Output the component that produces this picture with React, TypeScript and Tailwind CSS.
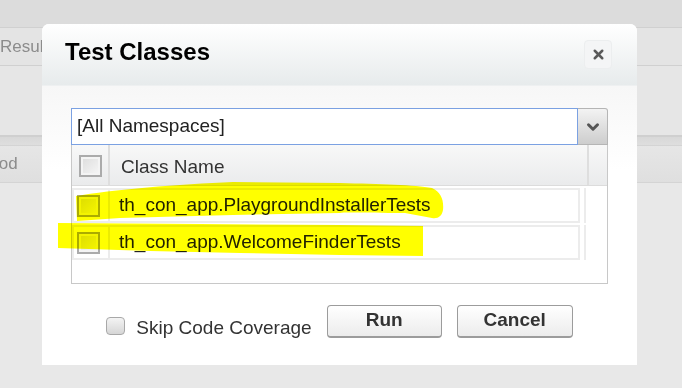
import { X, ChevronDown } from "lucide-react";

const font = { fontFamily: '"Liberation Sans", Arial, sans-serif' };

const Box = ({ className = "" }: { className?: string }) => (
  <div
    className={`h-[22px] w-[23px] border-2 border-[#ababab] bg-linear-to-br from-[#dcdcdc] to-[#f7f7f7] shadow-[inset_0_0_0_2px_#f4f4f4] ${className}`}
  ></div>
);

const rows = [
  "th_con_app.PlaygroundInstallerTests",
  "th_con_app.WelcomeFinderTests",
];

const App = () => {
  return (
    <div
      className="relative flex h-[388px] w-[682px] flex-col overflow-hidden bg-[#e8e8e8]"
      style={font}
    >
      {/* page behind the dialog */}
      <div className="h-[27px] bg-[#dcdcdc]"></div>
      <div className="h-[39px] border-y border-[#d0d0d0] bg-[#e4e4e4] text-[17px] leading-[37px] text-[#8c8c8c]">
        Results
      </div>
      <div className="h-[69px] bg-[#e6e6e6]"></div>
      <div className="h-[10px] border-t-2 border-[#cfcfcf] bg-linear-to-b from-[#d8d8d8] to-[#dedede]"></div>
      <div className="h-[38px] border-y border-[#d4d4d4] bg-linear-to-b from-[#e6e6e6] to-[#dfdfdf] pl-[1px] text-[17px] leading-[36px] text-[#8c8c8c]">
        <span className="-ml-[40px]">Method</span>
      </div>
      <div className="flex-1 bg-[#e8e8e8]"></div>

      {/* Test Classes dialog */}
      <div className="absolute left-[42px] top-[24px] flex h-[341px] w-[595px] flex-col rounded-[7px] bg-white">
        {/* header */}
        <div className="flex h-[62px] items-start justify-between rounded-t-[7px] border-b border-[#eef0f1] bg-linear-to-b from-white to-[#e7ebec] pl-[23px] pr-[25px]">
          <span className="mt-[14px] text-[24px] font-bold leading-[28px] text-black">
            Test Classes
          </span>
          <div className="mt-[16px] flex h-[29px] w-[28px] items-center justify-center rounded-[4px] border border-[#eceeef] bg-[#f4f5f6]">
            <X size={15} strokeWidth={4} className="text-[#5a5a5a]" />
          </div>
        </div>

        {/* body */}
        <div className="flex flex-1 flex-col bg-linear-to-b from-[#f7f7f7] to-white to-[30%] px-[29px] pt-[22px]">
          {/* namespace select */}
          <div className="flex h-[37px]">
            <div className="flex flex-1 items-center border border-[#7ba1e2] bg-white pl-[5px] text-[19px] text-[#222]">
              [All Namespaces]
            </div>
            <div className="flex w-[30px] items-center justify-center rounded-tr-[3px] border border-l-0 border-[#b5b5b5] bg-linear-to-b from-[#f3f3f3] to-[#cdcdcd]">
              <ChevronDown size={18} strokeWidth={4} className="text-[#555]" />
            </div>
          </div>

          {/* class table */}
          <div className="flex h-[139px] flex-col border border-t-0 border-[#c8c8c8] bg-white">
            <div className="flex h-[41px] border-b border-[#dcdcdc] bg-linear-to-b from-[#f8f8f8] to-[#eaebec]">
              <div className="flex w-[38px] items-center border-r-2 border-[#dedede] pl-[7px] pt-[2px]">
                <Box />
              </div>
              <div className="flex flex-1 items-center pl-[11px] pt-[4px] text-[19px] text-[#333]">
                Class Name
              </div>
              <div className="w-[20px] border-l-2 border-[#dedede]"></div>
            </div>

            {rows.map((name) => (
              <div key={name} className="mt-[2px] flex h-[35px]">
                <div className="flex w-[508px] border-2 border-[#ececec]">
                  <div className="flex w-[36px] items-center border-r-2 border-[#ececec] pl-[3px]">
                    <Box />
                  </div>
                  <div className="flex items-center pl-[9px] pb-[1px] text-[19px] text-[#222]">
                    {name}
                  </div>
                </div>
                <div className="ml-[4px] w-[2px] bg-[#ececec]"></div>
              </div>
            ))}
          </div>

          {/* footer */}
          <div className="mt-[21px] flex items-start justify-center">
            <div className="mt-[12px] h-[18px] w-[19px] rounded-[4px] border border-[#a8a8a8] bg-linear-to-b from-[#f4f4f4] to-[#d6d6d6]"></div>
            <span className="ml-[11px] mt-[12px] text-[19px] leading-[22px] text-[#333]">
              Skip Code Coverage
            </span>
            <button className="ml-[15px] flex h-[33px] w-[115px] items-center justify-center rounded-[4px] border border-b-2 border-[#9c9c9c] bg-linear-to-b from-white to-[#ececec] pb-[1px] text-[19px] font-bold text-[#333]">
              Run
            </button>
            <button className="ml-[15px] flex h-[33px] w-[116px] items-center justify-center rounded-[4px] border border-b-2 border-[#9c9c9c] bg-linear-to-b from-white to-[#ececec] pb-[1px] text-[19px] font-bold text-[#333]">
              Cancel
            </button>
          </div>
        </div>
      </div>

      {/* highlighter marks drawn over the rows */}
      <svg
        className="pointer-events-none absolute inset-0 mix-blend-multiply"
        width="682"
        height="388"
        viewBox="0 0 682 388"
      >
        <path
          fill="#ffff00"
          d="M76,196 C110,190 180,184 233,182 L340,183 C380,184 415,185 432,188 C441,192 444,200 443,210 C442,216 438,219 432,218 L405,213 C370,213 345,212 340,213 L233,215 L120,218 L77,221 Z"
        />
        <path
          fill="#ffff00"
          d="M58,223 L200,224 L340,225 L423,226 L423,256 L340,255 L240,253 L150,251 L58,248 Z"
        />
      </svg>
    </div>
  );
};

export default App;
